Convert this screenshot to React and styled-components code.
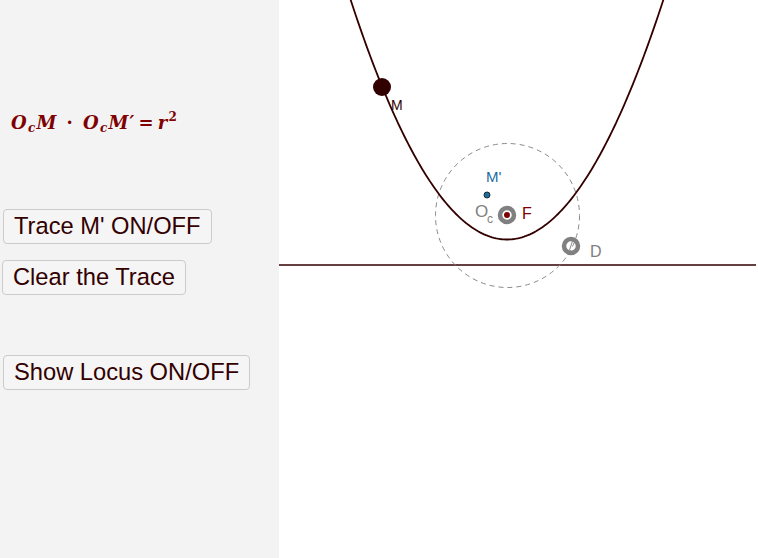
import React from 'react';
import styled, { createGlobalStyle } from 'styled-components';

const GlobalStyle = createGlobalStyle`
  html, body {
    margin: 0;
    padding: 0;
    background: #fff;
  }
  #root {
    width: 758px;
    height: 558px;
  }
`;

const Page = styled.div`
  display: flex;
  width: 758px;
  height: 558px;
  overflow: hidden;
  font-family: "Liberation Sans", Arial, sans-serif;
`;

const Sidebar = styled.div`
  width: 279px;
  flex-shrink: 0;
  background: #f3f3f3;
  display: flex;
  flex-direction: column;
  align-items: flex-start;
  padding: 110px 0 0 0;
  box-sizing: border-box;
`;

const Formula = styled.div`
  margin-left: 11px;
  height: 28px;
  font-family: "DejaVu Serif", "Liberation Serif", serif;
  font-weight: bold;
  font-style: italic;
  font-size: 18px;
  letter-spacing: 1.2px;
  color: #7f0000;
  white-space: nowrap;
  sub {
    font-size: 12px;
    vertical-align: -3px;
  }
  sup {
    font-size: 12px;
    font-style: normal;
    vertical-align: 8px;
  }
`;

const Dot = styled.span`
  font-style: normal;
  margin: 0 9px;
`;

const Eq = styled.span`
  font-style: normal;
  margin: 0 3px;
`;

const ToolButton = styled.button`
  margin-left: ${p => p.$left || 3}px;
  margin-top: ${p => p.$top}px;
  height: 35px;
  padding: 0 10px;
  box-sizing: border-box;
  background: #f5f5f5;
  border: 1px solid #cbcbcb;
  border-radius: 4px;
  color: #330000;
  font-family: "Liberation Sans", Arial, sans-serif;
  font-size: 23.7px;
  line-height: 33px;
  cursor: pointer;
`;

const Canvas = styled.div`
  flex: 1;
  position: relative;
  background: #fff;
  svg {
    display: block;
  }
`;

const parabola = () => {
  const pts = [];
  for (let x = 340; x <= 675; x += 2) {
    const y = 239.5 - ((x - 507) * (x - 507)) / 102;
    pts.push(`${x},${y.toFixed(2)}`);
  }
  return 'M' + pts.join(' L');
};

const Label = ({ x, y, color, children, size = 15 }) => (
  <text x={x} y={y} fill={color} fontSize={size} fontFamily="Liberation Sans, Arial, sans-serif">
    {children}
  </text>
);

const Construction = () => (
  <svg width="479" height="558" viewBox="279 0 479 558">
    <line x1="279" y1="265" x2="756" y2="265" stroke="#330000" strokeWidth="1.6" />
    <circle cx="507.5" cy="215.5" r="72" fill="none" stroke="#8a8a8a" strokeWidth="1" strokeDasharray="5 4" />
    <path d={parabola()} fill="none" stroke="#330000" strokeWidth="1.8" />
    <circle cx="382" cy="87" r="9" fill="#330000" />
    <Label x="391" y="110" color="#330000" size={14}>M</Label>
    <circle cx="487" cy="195" r="3" fill="#1a6e9e" stroke="#1e2a30" strokeWidth="1" />
    <Label x="486" y="182" color="#1a6e9e">M'</Label>
    <circle cx="507" cy="215" r="7" fill="#fff" stroke="#808080" strokeWidth="4.5" />
    <circle cx="507" cy="215" r="3" fill="#7f0000" />
    <Label x="522" y="219" color="#7f0000" size={16}>F</Label>
    <Label x="475" y="217" color="#808080" size={17}>O</Label>
    <Label x="487" y="223" color="#808080" size={12}>c</Label>
    <circle cx="571" cy="246" r="7" fill="none" stroke="#808080" strokeWidth="4.5" />
    <line x1="572.5" y1="241" x2="569.5" y2="250" stroke="#8a8a8a" strokeWidth="1" />
    <Label x="590" y="257" color="#808080" size={16}>D</Label>
  </svg>
);

export default function App() {
  return (
    <>
      <GlobalStyle />
      <Page>
        <Sidebar>
          <Formula>
            O<sub>c</sub>M<Dot>·</Dot>O<sub>c</sub>M′<Eq>=</Eq>r<sup>2</sup>
          </Formula>
          <ToolButton $top={71}>Trace M' ON/OFF</ToolButton>
          <ToolButton $top={16} $left={2}>Clear the Trace</ToolButton>
          <ToolButton $top={60}>Show Locus ON/OFF</ToolButton>
        </Sidebar>
        <Canvas>
          <Construction />
        </Canvas>
      </Page>
    </>
  );
}
